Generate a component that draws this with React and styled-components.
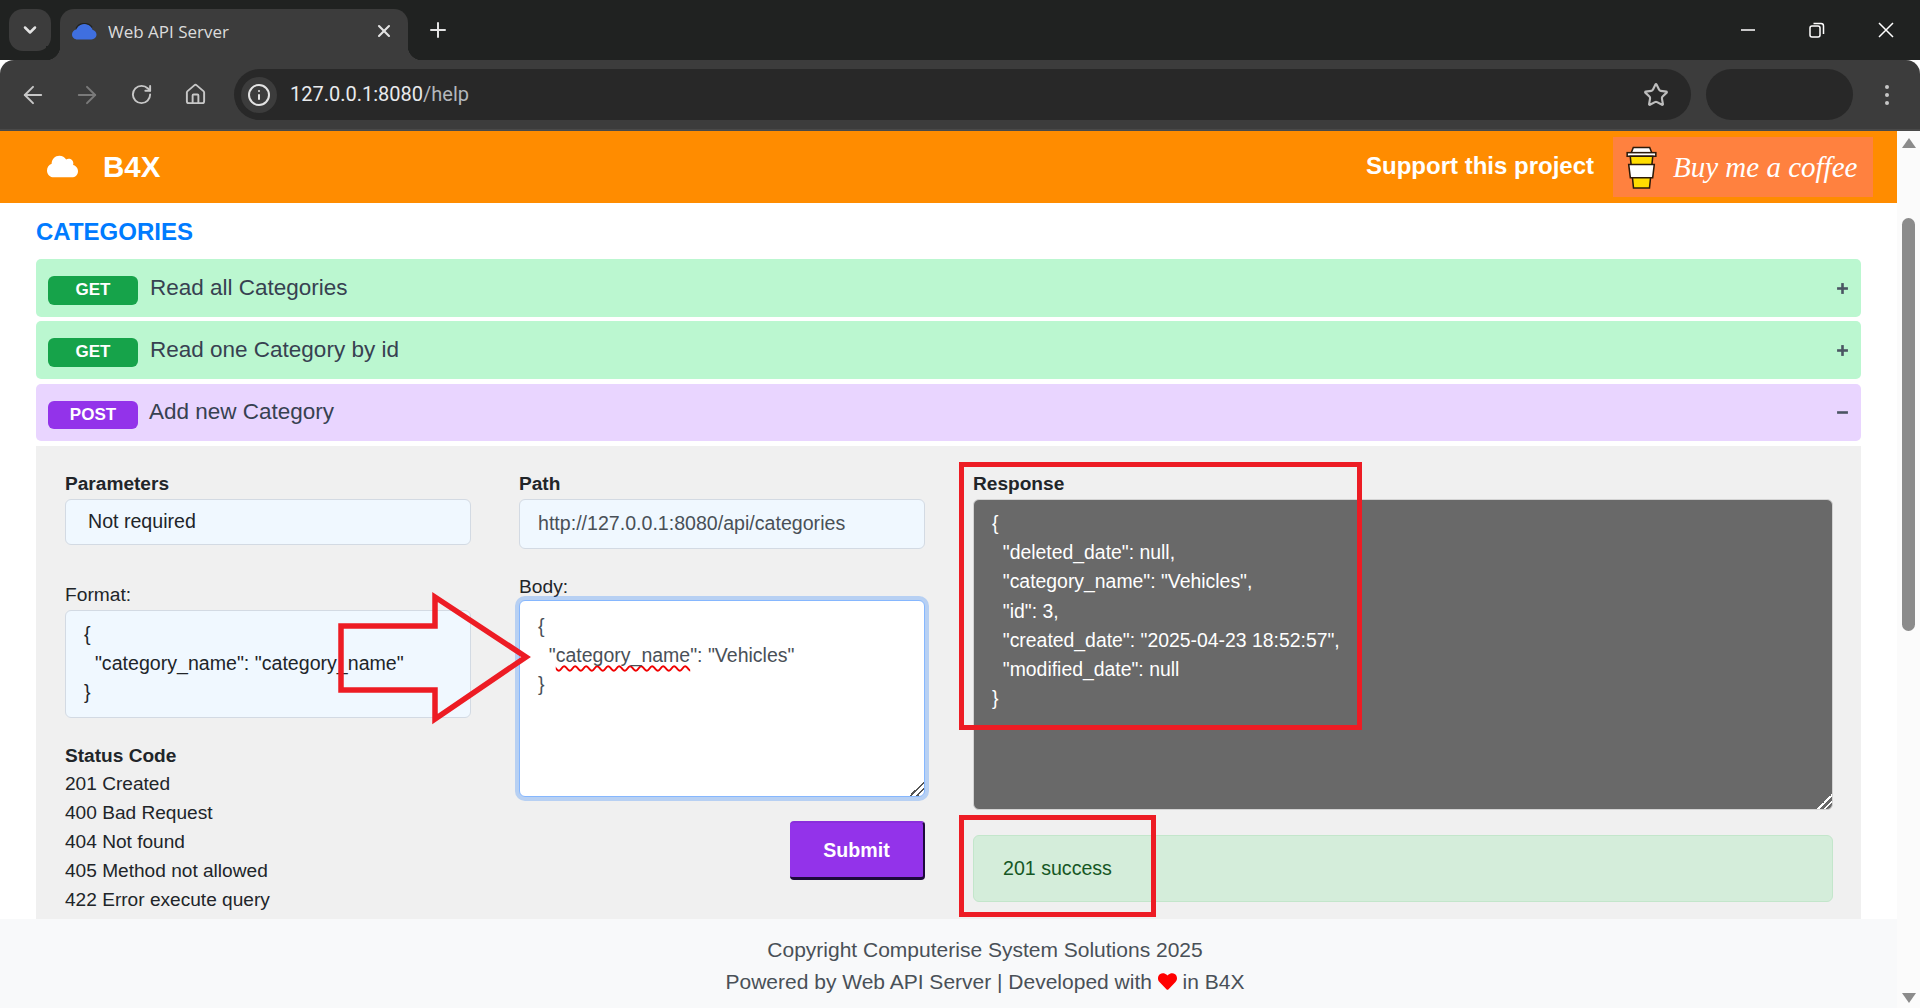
import React from 'react'
import styled, { createGlobalStyle } from 'styled-components'
import { ArrowLeft, ArrowRight, ChevronDown, House, Info, Plus, RotateCw, Star, X } from 'lucide-react'
import { FaCloud, FaHeart } from 'react-icons/fa'

const GlobalStyle = createGlobalStyle`
  html, body {
    margin: 0;
    height: 100%;
    overflow: hidden;
    background: #fff;
  }
  * {
    box-sizing: border-box;
  }
`

const Frame = styled.div`
  position: relative;
  width: 1920px;
  height: 1008px;
  display: flex;
  flex-direction: column;
  overflow: hidden;
  font-family: "Liberation Sans", Arial, sans-serif;
  font-size: 19.6px;
  line-height: 29px;
  color: #212529;
`

/* browser chrome */
const TabStrip = styled.div`
  height: 60px;
  flex: none;
  display: flex;
  align-items: flex-start;
  padding-left: 9px;
  background: #202221;
  color: #e3e3e3;
`

const TabSearch = styled.div`
  width: 42px;
  height: 42px;
  margin-top: 9px;
  border-radius: 14px;
  background: #3c3c3c;
  display: flex;
  align-items: center;
  justify-content: center;
`

const Tab = styled.div`
  position: relative;
  width: 348px;
  height: 51px;
  margin: 9px 0 0 9px;
  padding: 0 14px 7px 12px;
  display: flex;
  align-items: center;
  background: #3c3c3c;
  border-radius: 14px 14px 0 0;

  &::before, &::after {
    content: "";
    position: absolute;
    bottom: 0;
    width: 14px;
    height: 14px;
  }
  &::before {
    left: -14px;
    background: radial-gradient(circle at 0 0, #202221 14px, #3c3c3c 14.5px);
  }
  &::after {
    right: -14px;
    background: radial-gradient(circle at 100% 0, #202221 14px, #3c3c3c 14.5px);
  }
`

const TabTitle = styled.span`
  flex: 1;
  margin-left: 11px;
  font-family: "Open Sans", sans-serif;
  font-size: 17px;
  color: #dcdcdc;
`

const NewTab = styled.div`
  margin: 18px 0 0 18px;
  height: 24px;
  display: flex;
`

const WindowControls = styled.div`
  margin-left: auto;
  display: flex;
`

const WindowButton = styled.div`
  width: 69px;
  height: 60px;
  display: flex;
  align-items: center;
  justify-content: center;
`

const Toolbar = styled.div`
  height: 71px;
  flex: none;
  display: flex;
  align-items: flex-start;
  padding: 9px 0 0 6px;
  background: #3c3c3c;
  border-radius: 14px 14px 0 0;
  border-bottom: 2px solid #494949;
`

const NavButton = styled.div`
  width: 54px;
  height: 51px;
  display: flex;
  align-items: center;
  justify-content: center;
  color: ${p => (p.$dim ? '#7a7a7a' : '#c7c7c7')};
`

const Omnibox = styled.div`
  width: 1457px;
  height: 51px;
  margin-left: 12px;
  padding: 0 22px 0 7px;
  display: flex;
  align-items: center;
  border-radius: 26px;
  background: #282828;
  color: #bdbdbd;
`

const SiteInfo = styled.div`
  width: 36px;
  height: 36px;
  border-radius: 50%;
  background: #3c3c3c;
  display: flex;
  align-items: center;
  justify-content: center;
  color: #e3e3e3;
`

const Url = styled.span`
  flex: 1;
  margin-left: 13px;
  font-family: Roboto, sans-serif;
  font-size: 20px;
  color: #e8eaed;

  span {
    color: #b3b7bb;
  }
`

const ProfilePill = styled.div`
  width: 147px;
  height: 51px;
  margin-left: 15px;
  border-radius: 26px;
  background: #282828;
`

const MenuDots = styled.div`
  width: 8px;
  height: 51px;
  margin-left: 30px;
  display: flex;
  flex-direction: column;
  align-items: center;
  justify-content: center;
  gap: 4px;

  i {
    width: 4px;
    height: 4px;
    border-radius: 50%;
    background: #c7c7c7;
  }
`

/* page */
const Viewport = styled.div`
  flex: 1;
  min-height: 0;
  display: flex;
`

const Main = styled.div`
  flex: 1;
  min-width: 0;
  display: flex;
  flex-direction: column;
`

const Header = styled.header`
  height: 72px;
  flex: none;
  display: flex;
  align-items: center;
  padding: 0 24px 0 47px;
  background: #ff8c00;
  color: #fff;

  > svg {
    margin-top: -2px;
  }
`

const Brand = styled.div`
  margin-left: 25px;
  font-size: 29.5px;
  font-weight: 700;
  line-height: 1;
`

const Support = styled.div`
  margin: -4px 19px 0 auto;
  font-size: 24px;
  font-weight: 700;
`

const CoffeeButton = styled.div`
  width: 260px;
  height: 60px;
  padding-left: 13px;
  display: flex;
  align-items: center;
  background: #ff813f;
`

const CoffeeText = styled.span`
  margin-left: 16px;
  font-family: "Liberation Serif", serif;
  font-style: italic;
  font-size: 29px;
  white-space: nowrap;
`

const Content = styled.main`
  flex: 1;
  min-height: 0;
  overflow: hidden;
  display: flex;
  flex-direction: column;
  padding: 14px 36px 0;
`

const SectionTitle = styled.h2`
  margin: 0 0 12px;
  font-size: 24px;
  line-height: 30px;
  font-weight: 700;
  color: #007bff;
`

const Row = styled.div`
  height: ${p => (p.$open ? 57 : 58)}px;
  flex: none;
  margin-bottom: ${p => (p.$open ? 5 : p.$last ? 5 : 4)}px;
  padding: 0 12px 0 12px;
  display: flex;
  align-items: center;
  border-radius: 5px;
  background: ${p => (p.$method === 'POST' ? '#e9d5ff' : '#bbf7d0')};
`

const Badge = styled.span`
  width: 90px;
  height: ${p => (p.$method === 'POST' ? 28 : 29)}px;
  margin-top: 5px;
  padding-bottom: 2px;
  display: flex;
  align-items: center;
  justify-content: center;
  border-radius: 6px;
  font-size: 17px;
  font-weight: 700;
  color: #fff;
  background: ${p => (p.$method === 'POST' ? '#9333ea' : '#16a34a')};
`

const RowTitle = styled.span`
  flex: 1;
  margin: -2px 0 0 ${p => (p.$method === 'POST' ? 11 : 12)}px;
  font-size: 22.5px;
  color: #374151;
`

const Toggle = styled.span`
  width: 14px;
  height: 14px;
  display: flex;
  align-items: center;
  justify-content: center;
`

const Panel = styled.section`
  flex: 1;
  min-height: 0;
  overflow: hidden;
  display: grid;
  grid-template-columns: 406px 406px 860px;
  column-gap: 48px;
  padding: 23px 29px 0;
  background: #f0f0f0;
`

const Column = styled.div`
  display: flex;
  flex-direction: column;
`

const Heading = styled.div`
  font-size: 19.1px;
  font-weight: 700;
  margin-top: ${p => p.$top || 0}px;
  margin-bottom: ${p => p.$gap || 0}px;
`

const InfoBox = styled.div`
  height: ${p => p.$height}px;
  padding: ${p => (p.$code ? '9px 18px' : `0 ${p.$pad}px 2px`)};
  display: ${p => (p.$code ? 'block' : 'flex')};
  align-items: center;
  white-space: pre;
  border: 1px solid #d3dae3;
  border-radius: 6px;
  background: #f0f8ff;
  color: ${p => p.$color || '#212529'};
`

const FieldLabel = styled.div`
  margin-top: ${p => p.$top}px;
  margin-bottom: ${p => p.$after || 0}px;
  font-size: 19.2px;
  line-height: ${p => p.$line || 29}px;
`

const StatusList = styled.ul`
  margin: -1px 0 0;
  padding: 0;
  list-style: none;
  font-size: 19.1px;
`

const BodyInput = styled.div`
  height: 197px;
  padding: 11px 18px;
  overflow: auto;
  resize: vertical;
  white-space: pre;
  font-size: 19.5px;
  border: 1px solid #86b7fe;
  border-radius: 6px;
  background: #fff;
  color: #495057;
  box-shadow: 0 0 0 4px rgba(13, 110, 253, 0.25);

  &::-webkit-resizer {
    background: linear-gradient(135deg, transparent 50%, #555 50%, #555 58%, transparent 58%, transparent 72%, #555 72%, #555 80%, transparent 80%);
  }
`

const Misspelled = styled.span`
  text-decoration: underline wavy #f00000 1.5px;
  text-decoration-skip-ink: none;
  text-underline-offset: 3px;
`

const SubmitRow = styled.div`
  margin-top: 24px;
  display: flex;
  justify-content: flex-end;
`

const SubmitButton = styled.button`
  width: 135px;
  height: 59px;
  padding: 0;
  font: 700 19.6px "Liberation Sans", Arial, sans-serif;
  color: #fff;
  background: #9333ea;
  border: 0;
  border-top: 2px solid #8a2fdc;
  border-right: 2px solid #1e0a3c;
  border-bottom: 3px solid #1e0a3c;
  border-radius: 4px;
`

const ResponseBox = styled.div`
  height: 311px;
  margin-top: 1px;
  padding: 9px 18px;
  overflow: auto;
  resize: vertical;
  white-space: pre;
  font-size: 19.4px;
  line-height: 29.2px;
  border: 1px solid #d3d3d3;
  border-radius: 6px;
  background: #696969;
  color: #fff;

  &::-webkit-resizer {
    background: linear-gradient(135deg, transparent 50%, #fff 50%, #fff 58%, transparent 58%, transparent 72%, #fff 72%, #fff 80%, transparent 80%);
  }
`

const AlertBox = styled.div`
  height: 67px;
  margin-top: 25px;
  padding: 0 29px;
  display: flex;
  align-items: center;
  border: 1px solid #c3e6cb;
  border-radius: 6px;
  background: #d4edda;
  color: #155724;
`

const Footer = styled.footer`
  height: 89px;
  flex: none;
  padding: 15px 0 0 73px;
  text-align: center;
  font-size: 21px;
  line-height: 32px;
  color: #495057;
  background: #f8f9fa;

  svg {
    color: #f00;
    vertical-align: -2px;
  }
`

/* scrollbar */
const Scrollbar = styled.div`
  width: 23px;
  flex: none;
  display: flex;
  flex-direction: column;
  align-items: center;
  padding: 7px 0 5px;
  background: #fbfbfb;
`

const ScrollArrow = styled.div`
  width: 0;
  height: 0;
  border-left: 7px solid transparent;
  border-right: 7px solid transparent;
  ${p => (p.$down
    ? 'margin-top: auto; border-top: 10px solid #8b8b8b;'
    : 'border-bottom: 10px solid #8b8b8b;')}
`

const ScrollThumb = styled.div`
  width: 13px;
  height: 413px;
  margin-top: 70px;
  border-radius: 7px;
  background: #8b8b8b;
`

/* red annotations on top of the screenshot */
const ResponseMark = styled.div`
  position: absolute;
  left: 959px;
  top: 462px;
  width: 403px;
  height: 268px;
  border: 5px solid #ed1c24;
`

const AlertMark = styled.div`
  position: absolute;
  left: 959px;
  top: 815px;
  width: 197px;
  height: 102px;
  border: 5px solid #ed1c24;
`

const ArrowMark = styled.svg`
  position: absolute;
  left: 330px;
  top: 585px;
  width: 210px;
  height: 145px;
`

const CoffeeCup = () => (
  <svg width="31" height="43" viewBox="0 0 30 42">
    <path d="M7 1.5h16l2 5H5z" fill="#fff" stroke="#2b1a0a" strokeWidth="1.5" />
    <rect x="1" y="6.5" width="28" height="3.5" fill="#fff" stroke="#2b1a0a" strokeWidth="1.5" />
    <path d="M4 10h22l-3.2 31H7.2z" fill="#ffdd00" stroke="#2b1a0a" strokeWidth="1.5" />
    <path d="M2.5 18h25l-1.6 13H4.1z" fill="#fff" stroke="#2b1a0a" strokeWidth="1.5" />
  </svg>
)

const TabFavicon = () => (
  <svg width="25" height="17" viewBox="0 0 25 17">
    <path d="M5.5 16.5C2.4 16.5 0 14.3 0 11.5c0-2.500 1.900-4.500 4.400-4.900C5.600 3 8.800 1 12.500 1c3.900 0 7 2.400 8 5.700 2.300.5 4 2.500 4 4.900 0 2.800-2.300 4.900-5 4.900z" fill="#3f6fe0" />
    <path d="M4 5.500C5.500 2.400 8.800.5 12.500.5c3.200 0 6 1.500 7.600 3.900" fill="none" stroke="#202221" strokeWidth="1.200" />
  </svg>
)

const Minimize = () => (
  <svg width="16" height="16" viewBox="0 0 16 16"><path d="M1 8h14" stroke="#fff" strokeWidth="1.500" /></svg>
)

const Restore = () => (
  <svg width="16" height="16" viewBox="0 0 16 16" fill="none" stroke="#fff" strokeWidth="1.500">
    <rect x="1" y="4" width="10" height="11" rx="2" />
    <path d="M4.500 1.500h7.500a2.500 2.500 0 0 1 2.500 2.500v8" />
  </svg>
)

const CloseWindow = () => (
  <svg width="18" height="18" viewBox="0 0 18 18"><path d="M2 2l14 14M16 2L2 16" stroke="#fff" strokeWidth="1.500" /></svg>
)

const RowToggle = ({ open }) => (
  <Toggle>
    <svg width="13" height="13" viewBox="0 0 12 12" stroke="#4b5563" strokeWidth="2.400">
      <path d="M1 6h10" />
      {!open && <path d="M6 1v10" />}
    </svg>
  </Toggle>
)

const statusCodes = ['201 Created', '400 Bad Request', '404 Not found', '405 Method not allowed', '422 Error execute query']

const responseText = `{
  "deleted_date": null,
  "category_name": "Vehicles",
  "id": 3,
  "created_date": "2025-04-23 18:52:57",
  "modified_date": null
}`

const App = () => {
  return (
    <Frame>
      <GlobalStyle />
      <TabStrip>
        <TabSearch><ChevronDown size={20} strokeWidth={3} /></TabSearch>
        <Tab>
          <TabFavicon />
          <TabTitle>Web API Server</TabTitle>
          <X size={20} strokeWidth={2.5} />
        </Tab>
        <NewTab><Plus size={24} strokeWidth={2} /></NewTab>
        <WindowControls>
          <WindowButton><Minimize /></WindowButton>
          <WindowButton><Restore /></WindowButton>
          <WindowButton><CloseWindow /></WindowButton>
        </WindowControls>
      </TabStrip>
      <Toolbar>
        <NavButton><ArrowLeft size={28} strokeWidth={1.7} /></NavButton>
        <NavButton $dim><ArrowRight size={28} strokeWidth={1.7} /></NavButton>
        <NavButton><RotateCw size={23} strokeWidth={2} /></NavButton>
        <NavButton><House size={23} strokeWidth={2} /></NavButton>
        <Omnibox>
          <SiteInfo><Info size={24} strokeWidth={2} /></SiteInfo>
          <Url>127.0.0.1:8080<span>/help</span></Url>
          <Star size={26} strokeWidth={2} />
        </Omnibox>
        <ProfilePill />
        <MenuDots><i /><i /><i /></MenuDots>
      </Toolbar>

      <Viewport>
        <Main>
          <Header>
            <FaCloud size={31} />
            <Brand>B4X</Brand>
            <Support>Support this project</Support>
            <CoffeeButton>
              <CoffeeCup />
              <CoffeeText>Buy me a coffee</CoffeeText>
            </CoffeeButton>
          </Header>

          <Content>
            <SectionTitle>CATEGORIES</SectionTitle>
            <Row $method="GET">
              <Badge $method="GET">GET</Badge>
              <RowTitle $method="GET">Read all Categories</RowTitle>
              <RowToggle />
            </Row>
            <Row $method="GET" $last>
              <Badge $method="GET">GET</Badge>
              <RowTitle $method="GET">Read one Category by id</RowTitle>
              <RowToggle />
            </Row>
            <Row $method="POST" $open>
              <Badge $method="POST">POST</Badge>
              <RowTitle $method="POST">Add new Category</RowTitle>
              <RowToggle open />
            </Row>

            <Panel>
              <Column>
                <Heading $gap={1}>Parameters</Heading>
                <InfoBox $height={46} $pad={22}>Not required</InfoBox>
                <FieldLabel $top={35} $after={1}>Format:</FieldLabel>
                <InfoBox $code $height={108}>{`{
  "category_name": "category_name"
}`}</InfoBox>
                <Heading $top={23}>Status Code</Heading>
                <StatusList>
                  {statusCodes.map(code => <li key={code}>{code}</li>)}
                </StatusList>
              </Column>

              <Column>
                <Heading $gap={1}>Path</Heading>
                <InfoBox $height={50} $pad={18} $color="#495057">http://127.0.0.1:8080/api/categories</InfoBox>
                <FieldLabel $top={24} $line={27}>Body:</FieldLabel>
                <BodyInput>{'{\n  "'}<Misspelled>category_name</Misspelled>{'": "Vehicles"\n}'}</BodyInput>
                <SubmitRow><SubmitButton>Submit</SubmitButton></SubmitRow>
              </Column>

              <Column>
                <Heading>Response</Heading>
                <ResponseBox>{responseText}</ResponseBox>
                <AlertBox>201 success</AlertBox>
              </Column>
            </Panel>
          </Content>

          <Footer>
            <div>Copyright Computerise System Solutions 2025</div>
            <div>Powered by Web API Server | Developed with <FaHeart size={19} /> in B4X</div>
          </Footer>
        </Main>
        <Scrollbar>
          <ScrollArrow />
          <ScrollThumb />
          <ScrollArrow $down />
        </Scrollbar>
      </Viewport>

      <ResponseMark />
      <AlertMark />
      <ArrowMark viewBox="0 0 210 145">
        <path d="M11 41H105V12L196 72L105 134V105H11Z" fill="none" stroke="#ed1c24" strokeWidth="5.500" />
      </ArrowMark>
    </Frame>
  )
}

export default App
